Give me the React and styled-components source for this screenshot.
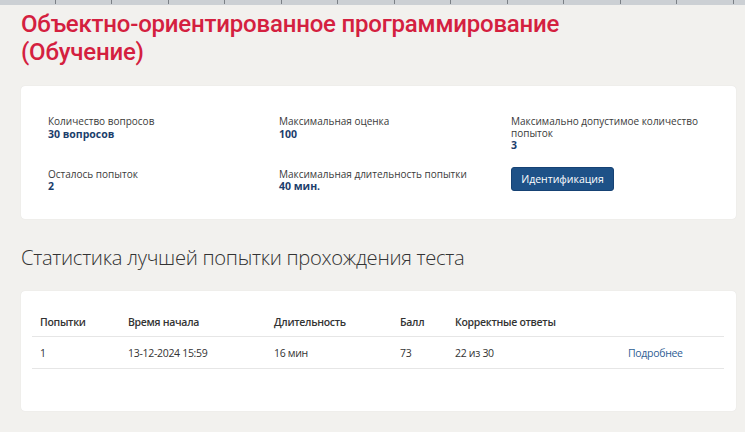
import React from 'react'
import styled, { createGlobalStyle } from 'styled-components'

const Global = createGlobalStyle`
  html, body {
    margin: 0;
    padding: 0;
    background: #f2f1ee;
  }
  body {
    font-family: "Open Sans", "Noto Sans", sans-serif;
    color: #333;
  }
`

const Page = styled.div`
  width: 745px;
  min-height: 432px;
  border-right: 2px solid #ffffff;
  background: #f2f1ee;
  overflow: hidden;
`

const Ruler = styled.div`
  height: 5px;
  background: #ccd0d4;
  display: flex;
  overflow: hidden;
  padding-left: 54.5px;
`

const Tick = styled.span`
  flex: 0 0 56.5px;
  box-sizing: border-box;
  border-left: 1px solid #7b8086;
  height: 4px;
`

const Content = styled.div`
  padding: 5px 9px 0 21px;
`

const Title = styled.h1`
  margin: 0;
  font-family: Roboto, "Noto Sans", sans-serif;
  font-weight: 500;
  font-size: 24px;
  line-height: 28px;
  color: #d4203f;
  letter-spacing: -0.2px;
`

const Card = styled.div`
  background: #fff;
  border-radius: 4px;
  box-shadow: 0 0 1px rgba(0, 0, 0, 0.12);
  padding: ${p => p.$pad};
`

const InfoGrid = styled.div`
  display: grid;
  grid-template-columns: 231px 232px 1fr;
  row-gap: 17px;
`

const Field = styled.div`
  display: flex;
  flex-direction: column;
  align-items: flex-start;
`

const Label = styled.div`
  font-size: 10px;
  line-height: 11.5px;
  color: #3a3a3a;
  max-width: 190px;
`

const Value = styled.div`
  font-size: 10.5px;
  line-height: 12.5px;
  font-weight: 700;
  color: #1c3e6c;
`

const Button = styled.button`
  margin-top: -2px;
  width: 103px;
  height: 24px;
  border: 1px solid #164274;
  border-radius: 3px;
  background: #1e5187;
  color: #fff;
  font-family: "Open Sans", sans-serif;
  font-size: 10.5px;
  padding: 0;
`

const Subtitle = styled.h2`
  margin: 0;
  padding: 26px 0 22px;
  font-family: "Open Sans", sans-serif;
  font-weight: 300;
  font-size: 20.2px;
  line-height: 24px;
  color: #333;
  letter-spacing: -0.3px;
`

const Table = styled.div`
  display: grid;
  grid-template-columns: 88px 146px 126px 55px 173px 1fr;
`

const Cell = styled.div`
  padding: 0 8px;
  height: ${p => (p.$head ? '28px' : '32px')};
  box-sizing: border-box;
  padding-top: ${p => (p.$head ? '0' : '1px')};
  display: flex;
  align-items: center;
  font-size: 10.5px;
  font-weight: ${p => (p.$head ? 600 : 400)};
  color: ${p => (p.$link ? '#2f6095' : '#333')};
  border-bottom: 1.5px solid #e6e6e6;
  letter-spacing: -0.3px;
  white-space: nowrap;
`

const Wrap = styled.div`
  margin-top: 20px;
`

const info = [
  ['Количество вопросов', '30 вопросов'],
  ['Максимальная оценка', '100'],
  ['Максимально допустимое количество попыток', '3'],
  ['Осталось попыток', '2'],
  ['Максимальная длительность попытки', '40 мин.'],
]

const heads = ['Попытки', 'Время начала', 'Длительность', 'Балл', 'Корректные ответы', '']
const row = ['1', '13-12-2024 15:59', '16 мин', '73', '22 из 30', 'Подробнее']

export default function App() {
  return (
    <Page>
      <Global />
      <Ruler>
        {Array.from({ length: 13 }).map((_, i) => (
          <Tick key={i} />
        ))}
      </Ruler>
      <Content>
        <Title>
          Объектно-ориентированное программирование
          <br />
          (Обучение)
        </Title>
        <Wrap>
          <Card $pad="30px 27px 26px">
            <InfoGrid>
              {info.map(([l, v]) => (
                <Field key={l}>
                  <Label>{l}</Label>
                  <Value>{v}</Value>
                </Field>
              ))}
              <Field>
                <Button>Идентификация</Button>
              </Field>
            </InfoGrid>
          </Card>
        </Wrap>
        <Subtitle>Статистика лучшей попытки прохождения теста</Subtitle>
        <Card $pad="18px 12px 42px 11px">
          <Table>
            {heads.map((h, i) => (
              <Cell $head key={'h' + i}>{h}</Cell>
            ))}
            {row.map((c, i) => (
              <Cell key={'r' + i} $link={i === 5}>{c}</Cell>
            ))}
          </Table>
        </Card>
      </Content>
    </Page>
  )
}
